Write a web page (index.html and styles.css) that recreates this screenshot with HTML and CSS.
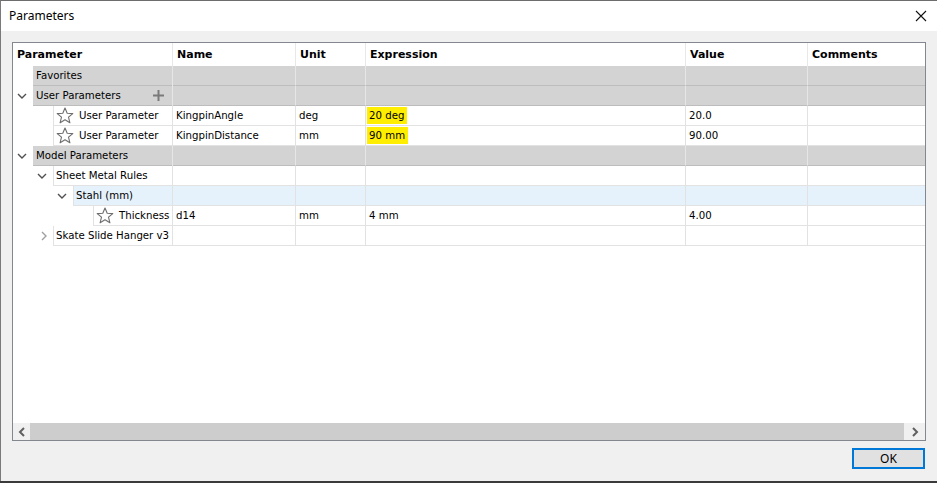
FILE: index.html
```html
<!DOCTYPE html>
<html>
<head>
<meta charset="utf-8">
<link rel="stylesheet" href="styles.css">
</head>
<body>
<div class="window">
  <div class="titlebar">
    <span class="title">Parameters</span>
    <svg class="close" width="12" height="12" viewBox="0 0 12 12"><path d="M1 1 L11 11 M11 1 L1 11" stroke="#111" stroke-width="1.1" fill="none"/></svg>
  </div>
  <div class="content">
    <div class="panel">
      <div class="grid">
        <div class="row header">
          <div class="cell c1">Parameter</div>
          <div class="cell">Name</div>
          <div class="cell">Unit</div>
          <div class="cell">Expression</div>
          <div class="cell">Value</div>
          <div class="cell">Comments</div>
        </div>

        <div class="row group">
          <div class="cell c1"><span class="indent l0"></span><span class="lbl">Favorites</span></div>
          <div class="cell"></div><div class="cell"></div><div class="cell"></div><div class="cell"></div><div class="cell"></div>
        </div>

        <div class="row group">
          <div class="cell c1"><span class="indent l0"><svg class="chev" width="10" height="6" viewBox="0 0 10 6"><path d="M1 1 L5 5 L9 1" stroke="#505050" stroke-width="1.4" fill="none"/></svg></span><span class="lbl">User Parameters</span>
            <svg class="plus" width="11" height="11" viewBox="0 0 11 11"><path d="M5.5 0 V11 M0 5.5 H11" stroke="#7a7a7a" stroke-width="2"/></svg></div>
          <div class="cell"></div><div class="cell"></div><div class="cell"></div><div class="cell"></div><div class="cell"></div>
        </div>

        <div class="row item">
          <div class="cell c1"><span class="indent l1"></span><span class="lbl bordered"><svg class="star" width="18" height="17" viewBox="0 0 18 17"><path d="M9 1 L11.2 6.2 L16.8 6.6 L12.5 10.2 L13.9 15.8 L9 12.8 L4.1 15.8 L5.5 10.2 L1.2 6.6 L6.8 6.2 Z" stroke="#6e6e6e" stroke-width="1.1" fill="none" stroke-linejoin="round"/></svg>User Parameter</span></div>
          <div class="cell">KingpinAngle</div>
          <div class="cell">deg</div>
          <div class="cell"><span class="hl">20 deg</span></div>
          <div class="cell">20.0</div>
          <div class="cell"></div>
        </div>

        <div class="row item">
          <div class="cell c1"><span class="indent l1"></span><span class="lbl bordered"><svg class="star" width="18" height="17" viewBox="0 0 18 17"><path d="M9 1 L11.2 6.2 L16.8 6.6 L12.5 10.2 L13.9 15.8 L9 12.8 L4.1 15.8 L5.5 10.2 L1.2 6.6 L6.8 6.2 Z" stroke="#6e6e6e" stroke-width="1.1" fill="none" stroke-linejoin="round"/></svg>User Parameter</span></div>
          <div class="cell">KingpinDistance</div>
          <div class="cell">mm</div>
          <div class="cell"><span class="hl">90 mm</span></div>
          <div class="cell">90.00</div>
          <div class="cell"></div>
        </div>

        <div class="row group">
          <div class="cell c1"><span class="indent l0"><svg class="chev" width="10" height="6" viewBox="0 0 10 6"><path d="M1 1 L5 5 L9 1" stroke="#505050" stroke-width="1.4" fill="none"/></svg></span><span class="lbl">Model Parameters</span></div>
          <div class="cell"></div><div class="cell"></div><div class="cell"></div><div class="cell"></div><div class="cell"></div>
        </div>

        <div class="row item">
          <div class="cell c1"><span class="indent l1"><svg class="chev" width="10" height="6" viewBox="0 0 10 6"><path d="M1 1 L5 5 L9 1" stroke="#505050" stroke-width="1.4" fill="none"/></svg></span><span class="lbl bordered">Sheet Metal Rules</span></div>
          <div class="cell"></div><div class="cell"></div><div class="cell"></div><div class="cell"></div><div class="cell"></div>
        </div>

        <div class="row item sel">
          <div class="cell c1"><span class="indent l2"><svg class="chev" width="10" height="6" viewBox="0 0 10 6"><path d="M1 1 L5 5 L9 1" stroke="#505050" stroke-width="1.4" fill="none"/></svg></span><span class="lbl bordered">Stahl (mm)</span></div>
          <div class="cell"></div><div class="cell"></div><div class="cell"></div><div class="cell"></div><div class="cell"></div>
        </div>

        <div class="row item">
          <div class="cell c1"><span class="indent l3"></span><span class="lbl bordered"><svg class="star" width="18" height="17" viewBox="0 0 18 17"><path d="M9 1 L11.2 6.2 L16.8 6.6 L12.5 10.2 L13.9 15.8 L9 12.8 L4.1 15.8 L5.5 10.2 L1.2 6.6 L6.8 6.2 Z" stroke="#6e6e6e" stroke-width="1.1" fill="none" stroke-linejoin="round"/></svg>Thickness</span></div>
          <div class="cell">d14</div>
          <div class="cell">mm</div>
          <div class="cell">4 mm</div>
          <div class="cell">4.00</div>
          <div class="cell"></div>
        </div>

        <div class="row item">
          <div class="cell c1"><span class="indent l1"><svg class="chev" width="6" height="10" viewBox="0 0 6 10"><path d="M1 1 L5 5 L1 9" stroke="#a0a0a0" stroke-width="1.4" fill="none"/></svg></span><span class="lbl bordered">Skate Slide Hanger v3</span></div>
          <div class="cell"></div><div class="cell"></div><div class="cell"></div><div class="cell"></div><div class="cell"></div>
        </div>
      </div>

      <div class="hscroll">
        <div class="sbtn"><svg width="8" height="10" viewBox="0 0 8 10"><path d="M6 1 L2 5 L6 9" stroke="#606060" stroke-width="2" fill="none"/></svg></div>
        <div class="thumb"></div>
        <div class="sbtn right"><svg width="8" height="10" viewBox="0 0 8 10"><path d="M2 1 L6 5 L2 9" stroke="#606060" stroke-width="2" fill="none"/></svg></div>
      </div>
    </div>
    <div class="footer">
      <button class="ok">OK</button>
    </div>
  </div>
  <div class="desk"></div>
</div>
</body>
</html>
```

FILE: styles.css
```css
* { box-sizing: border-box; }
html, body { margin: 0; padding: 0; }
body {
  width: 937px;
  height: 483px;
  overflow: hidden;
  background: #f0f0f0;
  font-family: "DejaVu Sans", Tahoma, sans-serif;
  font-size: 10.2px;
  color: #000;
}
.window {
  width: 937px;
  height: 483px;
  display: flex;
  flex-direction: column;
  border-left: 1px solid #7a7a7a;
  border-top: 1px solid #6d6d6d;
}
.titlebar {
  height: 30px;
  background: #fff;
  display: flex;
  align-items: center;
  justify-content: space-between;
  padding: 0 10px 0 8px;
  flex: none;
}
.title {
  font-family: "Noto Sans", "Open Sans", sans-serif;
  font-size: 12px;
  color: #000;
  margin-top: -1px;
}
.close { margin-top: -1px; }
.content {
  flex: 1;
  background: #f0f0f0;
  display: flex;
  flex-direction: column;
  padding: 11px 11px 0 11px;
}
.panel {
  width: 914px;
  height: 399px;
  border: 1px solid #828790;
  background: #fff;
  display: flex;
  flex-direction: column;
}
.grid { flex: 1; }
.row {
  display: grid;
  grid-template-columns: 160px 123px 70px 320px 122px 117px;
  height: 20px;
}
.cell {
  border-right: 1px solid #e2e2e2;
  border-bottom: 1px solid #e2e2e2;
  padding-left: 3px;
  display: flex;
  align-items: center;
  white-space: nowrap;
  overflow: hidden;
}
.cell:last-child { border-right: none; }
.header { height: 23px; }
.header .cell {
  font-weight: bold;
  font-size: 11px;
  padding-left: 4px;
  border-bottom: none;
  border-right-color: #e8e8e8;
  padding-bottom: 1px;
}
.c1 { padding-left: 0; position: relative; }
.header .c1 { padding-left: 4px; }
.indent {
  flex: none;
  height: 100%;
  display: flex;
  align-items: center;
  justify-content: flex-end;
  padding-right: 6px;
  background: #fff;
}
.indent.l0 { width: 20px; }
.indent.l1 { width: 40px; }
.indent.l2 { width: 60px; }
.indent.l3 { width: 80px; }
.row .c1 { border-bottom: none; }
.lbl {
  flex: 1;
  height: 100%;
  display: flex;
  align-items: center;
  padding-left: 3px;
  border-bottom: 1px solid #e2e2e2;
}
.lbl.bordered { border-left: 1px solid #e2e2e2; padding-left: 2px; }
.star { margin-right: 5px; flex: none; }
.group .cell { background: #d3d3d3; border-bottom-color: #bdbdbd; border-right-color: #e6e6e6; }
.group .c1 { background: transparent; }
.group .lbl { background: #d3d3d3; border-bottom-color: #bdbdbd; }
.sel .cell { background: #e5f1fb; }
.sel .c1 { background: transparent; }
.sel .lbl { background: #e5f1fb; }
.plus { position: absolute; left: 140px; top: 4px; }
.hl {
  background: #ffee00;
  padding: 3px 3px 3px 2px;
  margin-left: -2px;
}
.hscroll {
  height: 17px;
  display: flex;
  flex: none;
}
.sbtn {
  width: 17px;
  background: #f0f0f0;
  display: flex;
  align-items: center;
  justify-content: center;
}
.sbtn.right { width: 21px; }
.thumb { flex: 1; background: #cdcdcd; }
.footer {
  display: flex;
  justify-content: flex-end;
  padding-top: 7px;
  padding-right: 1px;
}
.ok {
  width: 73px;
  height: 21px;
  border: 2px solid #0078d7;
  background: #e1e1e1;
  font-family: "Noto Sans", "Open Sans", sans-serif;
  font-size: 12px;
  color: #000;
  padding: 0;
  line-height: 15px;
}
.desk {
  height: 2px;
  background: #3a3a3a;
  flex: none;
  margin-left: -1px;
}
```
